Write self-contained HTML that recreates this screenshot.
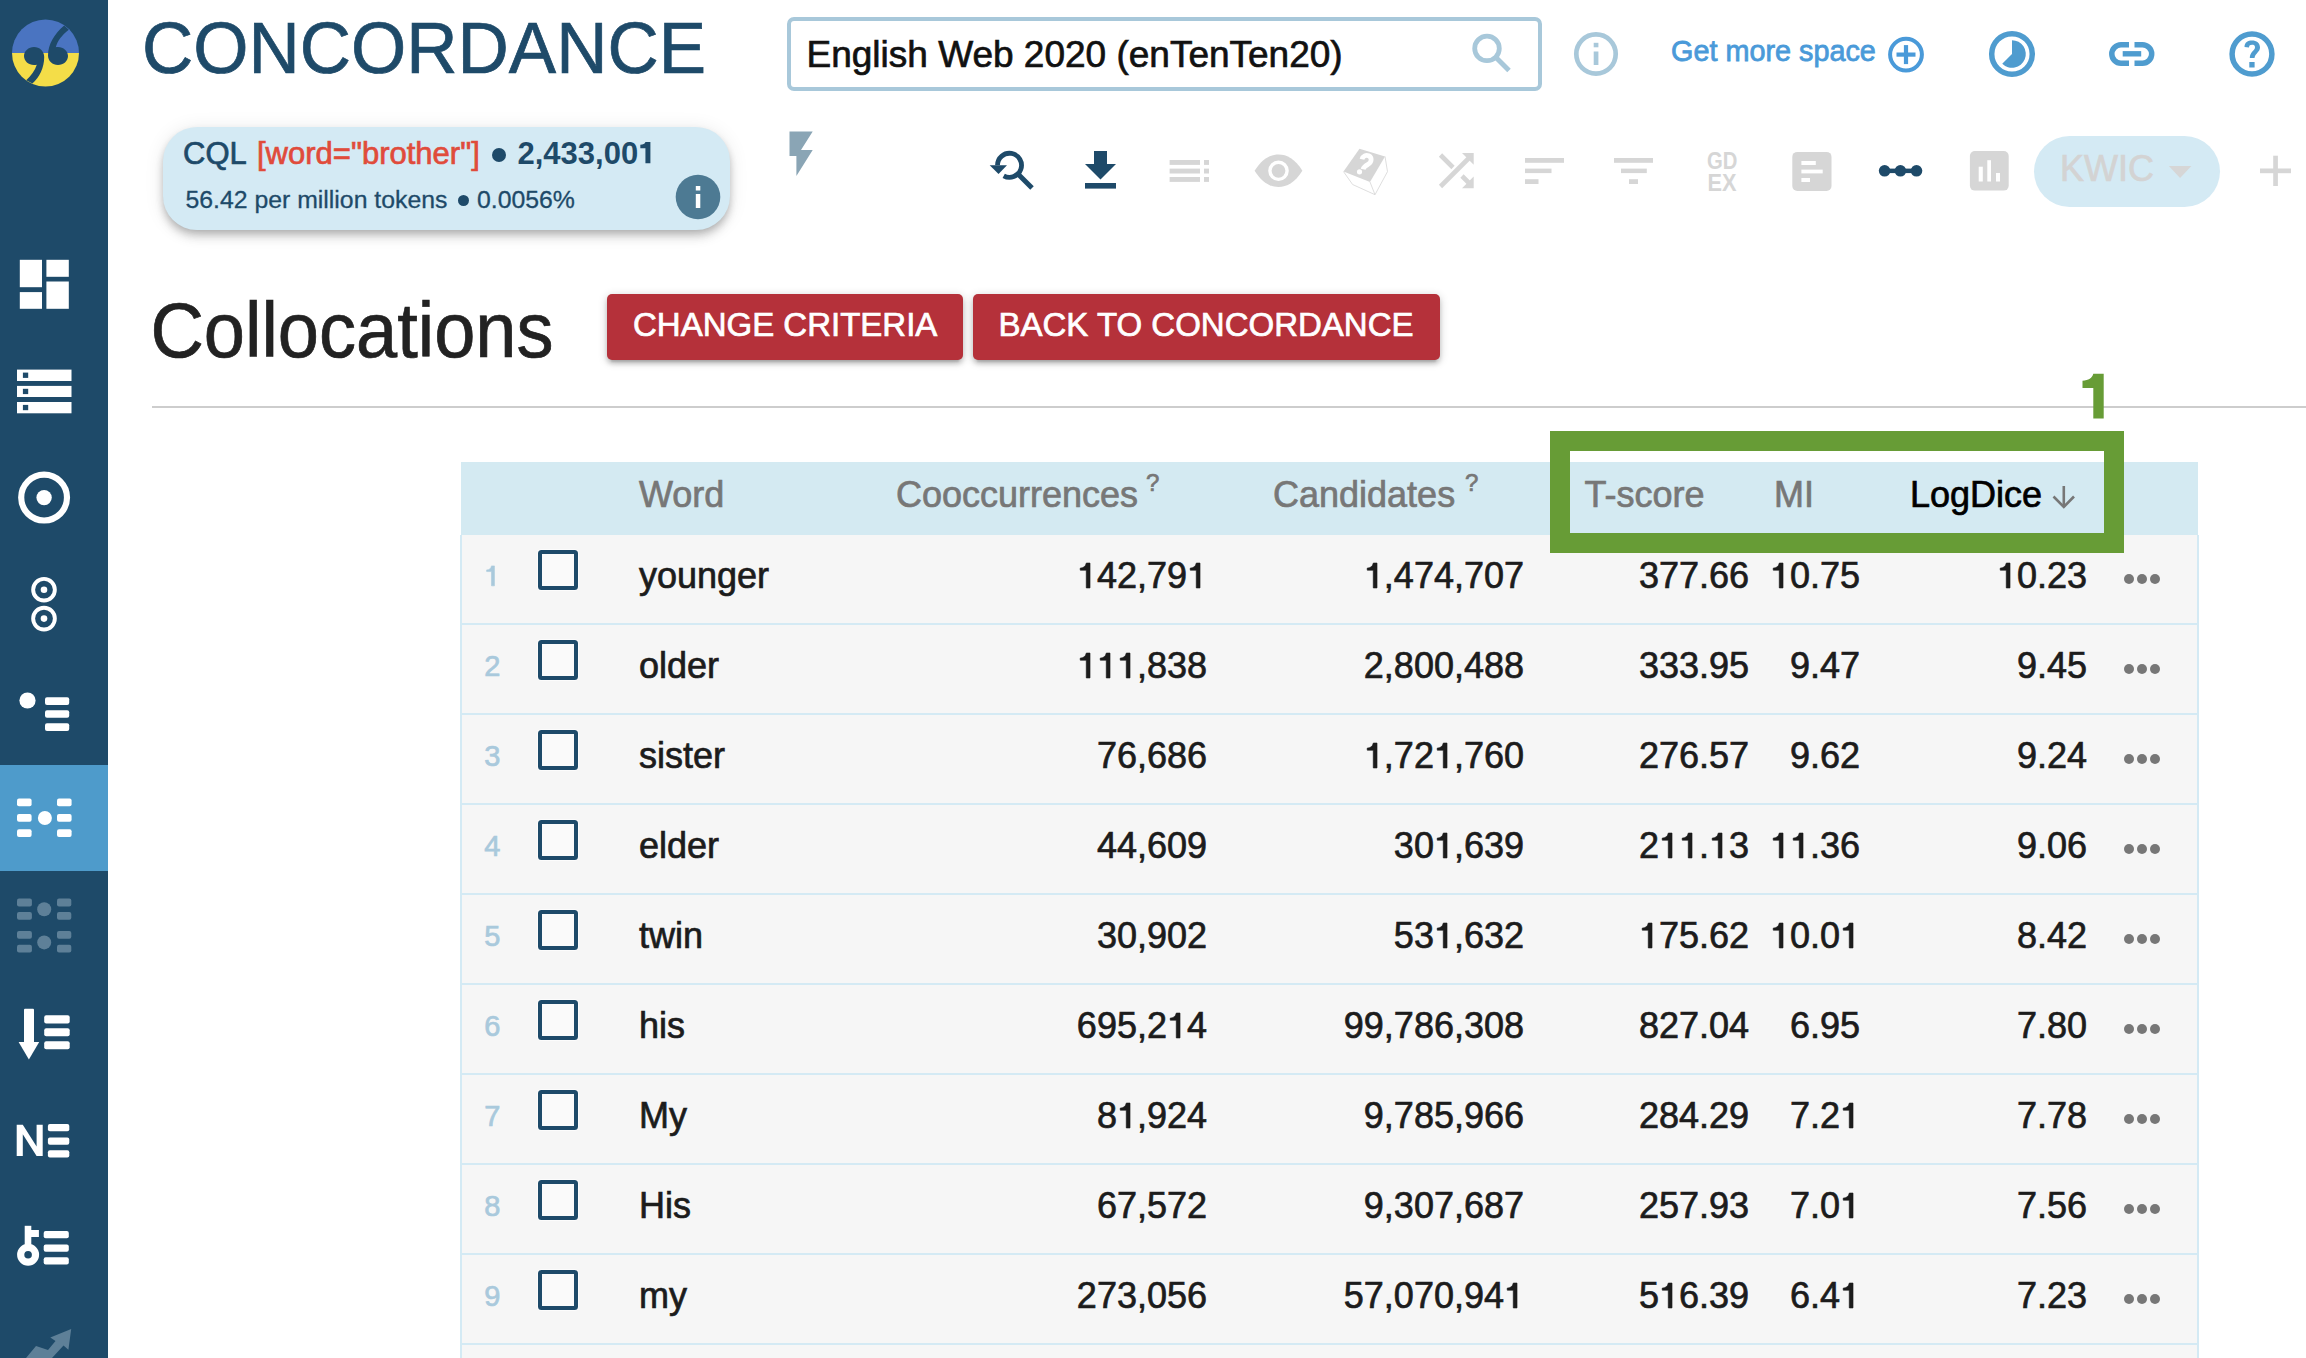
<!DOCTYPE html>
<html><head><meta charset="utf-8">
<style>
html,body{margin:0;padding:0;background:#fff;}
body{width:2306px;height:1358px;position:relative;overflow:hidden;font-family:"Liberation Sans",sans-serif;}
.t{position:absolute;line-height:1;white-space:nowrap;margin:0;-webkit-text-stroke-width:0.7px;}
.abs{position:absolute;}
#sidebar{left:0;top:0;width:108px;height:1358px;background:#1e4a69;}
#active{left:0;top:765px;width:108px;height:106px;background:#4e9bcb;}
#search{left:787px;top:17px;width:747px;height:66px;border:4px solid #a8c8da;border-radius:7px;}
#cql{left:163px;top:127px;width:567px;height:103px;background:#d4eaf4;border-radius:34px;box-shadow:0 8px 10px rgba(0,0,0,.10),0 2px 20px rgba(0,0,0,.09),0 4px 8px -2px rgba(0,0,0,.24);}
#kwic{left:2034px;top:136px;width:186px;height:71px;background:#d4eaf4;border-radius:36px;}
.btn{background:#b5313a;border-radius:5px;box-shadow:0 4px 4px rgba(0,0,0,.14),0 6px 2px -4px rgba(0,0,0,.12),0 2px 10px rgba(0,0,0,.2);}
#sep{left:152px;top:406px;width:2154px;height:2px;background:#cdcdcd;}
#thead{left:461px;top:462px;width:1737px;height:73px;background:#d4eaf2;}
#tbody{left:460px;top:535px;width:1735px;height:900px;background:#f6f6f6;border-left:2px solid #d4eaf4;border-right:2px solid #d4eaf4;}
.rsep{position:absolute;left:462px;width:1735px;height:2px;background:#d4eaf4;}
.cb{position:absolute;left:538px;width:32px;height:32px;border:4px solid #1e4a69;border-radius:3.5px;background:#fafafa;box-shadow:0 0 0 1px #fcfcfc;}
.idx{color:#a9c9dc;font-size:29px;}
.cell{color:#1c1c1c;font-size:36px;}
.num{text-align:right;}
.hd{color:#777;font-size:36px;}
#green{left:1550px;top:431px;width:534px;height:82px;border:20px solid #679c36;}
.one{width:0.556em;height:0.72em;vertical-align:baseline;fill:currentColor;stroke:currentColor;stroke-width:19px;overflow:visible;}
</style></head>
<body>
<div id="sidebar" class="abs"></div>
<div id="active" class="abs"></div>

<!-- top header -->
<div class="t" style="left:142px;top:13px;font-size:71px;color:#1e4a69;transform:scaleY(1.03);transform-origin:0 60px;">CONCORDANCE</div>
<div id="search" class="abs"></div>
<div class="t" style="left:806.5px;top:35.7px;font-size:37px;color:#111;">English Web 2020 (enTenTen20)</div>
<div class="t" style="left:1671.2px;top:35.8px;font-size:30px;color:#4a9ad9;-webkit-text-stroke:0.8px #4a9ad9;transform:scaleX(0.96);transform-origin:0 0;">Get more space</div>

<!-- CQL box -->
<div id="cql" class="abs"></div>
<div class="t" style="left:183px;top:137.8px;font-size:31px;color:#1e4a69;">CQL</div>
<div class="t" style="left:257px;top:137.8px;font-size:31px;color:#e04b3b;">[word="brother"]</div>
<div class="abs" style="left:492px;top:148px;width:14px;height:14px;border-radius:50%;background:#1e4a69;"></div>
<div class="t" style="left:517.5px;top:137.8px;font-size:31px;font-weight:bold;color:#1e4a69;-webkit-text-stroke-width:0;">2,433,00<svg class="one" style="stroke-width:0" viewBox="0 0 556 720"><path d="M240,30 L400,30 L400,720 L240,720 L240,236 L75,236 L75,120 C160,115 225,90 240,30 Z"/></svg></div>
<div class="t" style="left:185.5px;top:188px;font-size:24.8px;color:#1e4a69;-webkit-text-stroke-width:0.3px;">56.42 per million tokens</div>
<div class="abs" style="left:457.5px;top:195px;width:11px;height:11px;border-radius:50%;background:#1e4a69;"></div>
<div class="t" style="left:477px;top:188px;font-size:24.8px;color:#1e4a69;-webkit-text-stroke-width:0.3px;">0.0056%</div>

<div id="kwic" class="abs"></div>
<div class="t" style="left:2060px;top:150.5px;font-size:36px;color:#d3d3d3;">KWIC</div>

<!-- Collocations heading -->
<div class="t" style="left:150.4px;top:294.7px;font-size:74px;color:#222;transform:scaleY(1.06);transform-origin:0 62.7px;">Collocations</div>
<div class="abs btn" style="left:607px;top:294px;width:356px;height:66px;"></div>
<div class="abs btn" style="left:973px;top:294px;width:467px;height:66px;"></div>
<div class="t" style="left:633px;top:307.8px;font-size:33px;color:#fff;">CHANGE CRITERIA</div>
<div class="t" style="left:998.5px;top:307.8px;font-size:33px;color:#fff;">BACK TO CONCORDANCE</div>
<div id="sep" class="abs"></div>

<!-- table -->
<div id="thead" class="abs"></div>
<div id="tbody" class="abs"></div>
<div class="t hd" style="left:639px;top:476.5px;">Word</div>
<div class="t hd" style="left:896px;top:476.5px;">Cooccurrences</div>
<div class="t" style="left:1146px;top:471px;font-size:24px;color:#777;">?</div>
<div class="t hd" style="left:1273px;top:476.5px;">Candidates</div>
<div class="t" style="left:1465px;top:471px;font-size:24px;color:#777;">?</div>
<div class="t hd" style="left:1584.5px;top:476.5px;">T-score</div>
<div class="t hd" style="left:1774px;top:476.5px;">MI</div>
<div class="t hd" style="left:1910px;top:476.5px;color:#000;">LogDice</div>

<!--ROWS-->
<div class="rsep" style="top:623px;"></div>
<div class="t idx" style="left:484.2px;top:562.0px;"><svg class="one" viewBox="0 0 556 720"><path d="M258,30 L361,30 L361,720 L258,720 L258,226 L90,226 L90,170 C175,166 240,128 258,30 Z"/></svg></div>
<div class="cb" style="top:550px;"></div>
<div class="t cell" style="left:639px;top:557.5px;">younger</div>
<div class="t cell num" style="left:907px;width:300px;top:557.5px;"><svg class="one" viewBox="0 0 556 720"><path d="M258,30 L361,30 L361,720 L258,720 L258,226 L90,226 L90,170 C175,166 240,128 258,30 Z"/></svg>42,79<svg class="one" viewBox="0 0 556 720"><path d="M258,30 L361,30 L361,720 L258,720 L258,226 L90,226 L90,170 C175,166 240,128 258,30 Z"/></svg></div>
<div class="t cell num" style="left:1224px;width:300px;top:557.5px;"><svg class="one" viewBox="0 0 556 720"><path d="M258,30 L361,30 L361,720 L258,720 L258,226 L90,226 L90,170 C175,166 240,128 258,30 Z"/></svg>,474,707</div>
<div class="t cell num" style="left:1449px;width:300px;top:557.5px;">377.66</div>
<div class="t cell num" style="left:1560px;width:300px;top:557.5px;"><svg class="one" viewBox="0 0 556 720"><path d="M258,30 L361,30 L361,720 L258,720 L258,226 L90,226 L90,170 C175,166 240,128 258,30 Z"/></svg>0.75</div>
<div class="t cell num" style="left:1787px;width:300px;top:557.5px;"><svg class="one" viewBox="0 0 556 720"><path d="M258,30 L361,30 L361,720 L258,720 L258,226 L90,226 L90,170 C175,166 240,128 258,30 Z"/></svg>0.23</div>
<div class="abs" style="left:2123.9px;top:573.7px;width:10px;height:10px;border-radius:50%;background:#777;"></div>
<div class="abs" style="left:2136.8px;top:573.7px;width:10px;height:10px;border-radius:50%;background:#777;"></div>
<div class="abs" style="left:2149.7px;top:573.7px;width:10px;height:10px;border-radius:50%;background:#777;"></div>
<div class="rsep" style="top:713px;"></div>
<div class="t idx" style="left:484.2px;top:652.0px;">2</div>
<div class="cb" style="top:640px;"></div>
<div class="t cell" style="left:639px;top:647.5px;">older</div>
<div class="t cell num" style="left:907px;width:300px;top:647.5px;"><svg class="one" viewBox="0 0 556 720"><path d="M258,30 L361,30 L361,720 L258,720 L258,226 L90,226 L90,170 C175,166 240,128 258,30 Z"/></svg><svg class="one" viewBox="0 0 556 720"><path d="M258,30 L361,30 L361,720 L258,720 L258,226 L90,226 L90,170 C175,166 240,128 258,30 Z"/></svg><svg class="one" viewBox="0 0 556 720"><path d="M258,30 L361,30 L361,720 L258,720 L258,226 L90,226 L90,170 C175,166 240,128 258,30 Z"/></svg>,838</div>
<div class="t cell num" style="left:1224px;width:300px;top:647.5px;">2,800,488</div>
<div class="t cell num" style="left:1449px;width:300px;top:647.5px;">333.95</div>
<div class="t cell num" style="left:1560px;width:300px;top:647.5px;">9.47</div>
<div class="t cell num" style="left:1787px;width:300px;top:647.5px;">9.45</div>
<div class="abs" style="left:2123.9px;top:663.7px;width:10px;height:10px;border-radius:50%;background:#777;"></div>
<div class="abs" style="left:2136.8px;top:663.7px;width:10px;height:10px;border-radius:50%;background:#777;"></div>
<div class="abs" style="left:2149.7px;top:663.7px;width:10px;height:10px;border-radius:50%;background:#777;"></div>
<div class="rsep" style="top:803px;"></div>
<div class="t idx" style="left:484.2px;top:742.0px;">3</div>
<div class="cb" style="top:730px;"></div>
<div class="t cell" style="left:639px;top:737.5px;">sister</div>
<div class="t cell num" style="left:907px;width:300px;top:737.5px;">76,686</div>
<div class="t cell num" style="left:1224px;width:300px;top:737.5px;"><svg class="one" viewBox="0 0 556 720"><path d="M258,30 L361,30 L361,720 L258,720 L258,226 L90,226 L90,170 C175,166 240,128 258,30 Z"/></svg>,72<svg class="one" viewBox="0 0 556 720"><path d="M258,30 L361,30 L361,720 L258,720 L258,226 L90,226 L90,170 C175,166 240,128 258,30 Z"/></svg>,760</div>
<div class="t cell num" style="left:1449px;width:300px;top:737.5px;">276.57</div>
<div class="t cell num" style="left:1560px;width:300px;top:737.5px;">9.62</div>
<div class="t cell num" style="left:1787px;width:300px;top:737.5px;">9.24</div>
<div class="abs" style="left:2123.9px;top:753.7px;width:10px;height:10px;border-radius:50%;background:#777;"></div>
<div class="abs" style="left:2136.8px;top:753.7px;width:10px;height:10px;border-radius:50%;background:#777;"></div>
<div class="abs" style="left:2149.7px;top:753.7px;width:10px;height:10px;border-radius:50%;background:#777;"></div>
<div class="rsep" style="top:893px;"></div>
<div class="t idx" style="left:484.2px;top:832.0px;">4</div>
<div class="cb" style="top:820px;"></div>
<div class="t cell" style="left:639px;top:827.5px;">elder</div>
<div class="t cell num" style="left:907px;width:300px;top:827.5px;">44,609</div>
<div class="t cell num" style="left:1224px;width:300px;top:827.5px;">30<svg class="one" viewBox="0 0 556 720"><path d="M258,30 L361,30 L361,720 L258,720 L258,226 L90,226 L90,170 C175,166 240,128 258,30 Z"/></svg>,639</div>
<div class="t cell num" style="left:1449px;width:300px;top:827.5px;">2<svg class="one" viewBox="0 0 556 720"><path d="M258,30 L361,30 L361,720 L258,720 L258,226 L90,226 L90,170 C175,166 240,128 258,30 Z"/></svg><svg class="one" viewBox="0 0 556 720"><path d="M258,30 L361,30 L361,720 L258,720 L258,226 L90,226 L90,170 C175,166 240,128 258,30 Z"/></svg>.<svg class="one" viewBox="0 0 556 720"><path d="M258,30 L361,30 L361,720 L258,720 L258,226 L90,226 L90,170 C175,166 240,128 258,30 Z"/></svg>3</div>
<div class="t cell num" style="left:1560px;width:300px;top:827.5px;"><svg class="one" viewBox="0 0 556 720"><path d="M258,30 L361,30 L361,720 L258,720 L258,226 L90,226 L90,170 C175,166 240,128 258,30 Z"/></svg><svg class="one" viewBox="0 0 556 720"><path d="M258,30 L361,30 L361,720 L258,720 L258,226 L90,226 L90,170 C175,166 240,128 258,30 Z"/></svg>.36</div>
<div class="t cell num" style="left:1787px;width:300px;top:827.5px;">9.06</div>
<div class="abs" style="left:2123.9px;top:843.7px;width:10px;height:10px;border-radius:50%;background:#777;"></div>
<div class="abs" style="left:2136.8px;top:843.7px;width:10px;height:10px;border-radius:50%;background:#777;"></div>
<div class="abs" style="left:2149.7px;top:843.7px;width:10px;height:10px;border-radius:50%;background:#777;"></div>
<div class="rsep" style="top:983px;"></div>
<div class="t idx" style="left:484.2px;top:922.0px;">5</div>
<div class="cb" style="top:910px;"></div>
<div class="t cell" style="left:639px;top:917.5px;">twin</div>
<div class="t cell num" style="left:907px;width:300px;top:917.5px;">30,902</div>
<div class="t cell num" style="left:1224px;width:300px;top:917.5px;">53<svg class="one" viewBox="0 0 556 720"><path d="M258,30 L361,30 L361,720 L258,720 L258,226 L90,226 L90,170 C175,166 240,128 258,30 Z"/></svg>,632</div>
<div class="t cell num" style="left:1449px;width:300px;top:917.5px;"><svg class="one" viewBox="0 0 556 720"><path d="M258,30 L361,30 L361,720 L258,720 L258,226 L90,226 L90,170 C175,166 240,128 258,30 Z"/></svg>75.62</div>
<div class="t cell num" style="left:1560px;width:300px;top:917.5px;"><svg class="one" viewBox="0 0 556 720"><path d="M258,30 L361,30 L361,720 L258,720 L258,226 L90,226 L90,170 C175,166 240,128 258,30 Z"/></svg>0.0<svg class="one" viewBox="0 0 556 720"><path d="M258,30 L361,30 L361,720 L258,720 L258,226 L90,226 L90,170 C175,166 240,128 258,30 Z"/></svg></div>
<div class="t cell num" style="left:1787px;width:300px;top:917.5px;">8.42</div>
<div class="abs" style="left:2123.9px;top:933.7px;width:10px;height:10px;border-radius:50%;background:#777;"></div>
<div class="abs" style="left:2136.8px;top:933.7px;width:10px;height:10px;border-radius:50%;background:#777;"></div>
<div class="abs" style="left:2149.7px;top:933.7px;width:10px;height:10px;border-radius:50%;background:#777;"></div>
<div class="rsep" style="top:1073px;"></div>
<div class="t idx" style="left:484.2px;top:1012.0px;">6</div>
<div class="cb" style="top:1000px;"></div>
<div class="t cell" style="left:639px;top:1007.5px;">his</div>
<div class="t cell num" style="left:907px;width:300px;top:1007.5px;">695,2<svg class="one" viewBox="0 0 556 720"><path d="M258,30 L361,30 L361,720 L258,720 L258,226 L90,226 L90,170 C175,166 240,128 258,30 Z"/></svg>4</div>
<div class="t cell num" style="left:1224px;width:300px;top:1007.5px;">99,786,308</div>
<div class="t cell num" style="left:1449px;width:300px;top:1007.5px;">827.04</div>
<div class="t cell num" style="left:1560px;width:300px;top:1007.5px;">6.95</div>
<div class="t cell num" style="left:1787px;width:300px;top:1007.5px;">7.80</div>
<div class="abs" style="left:2123.9px;top:1023.7px;width:10px;height:10px;border-radius:50%;background:#777;"></div>
<div class="abs" style="left:2136.8px;top:1023.7px;width:10px;height:10px;border-radius:50%;background:#777;"></div>
<div class="abs" style="left:2149.7px;top:1023.7px;width:10px;height:10px;border-radius:50%;background:#777;"></div>
<div class="rsep" style="top:1163px;"></div>
<div class="t idx" style="left:484.2px;top:1102.0px;">7</div>
<div class="cb" style="top:1090px;"></div>
<div class="t cell" style="left:639px;top:1097.5px;">My</div>
<div class="t cell num" style="left:907px;width:300px;top:1097.5px;">8<svg class="one" viewBox="0 0 556 720"><path d="M258,30 L361,30 L361,720 L258,720 L258,226 L90,226 L90,170 C175,166 240,128 258,30 Z"/></svg>,924</div>
<div class="t cell num" style="left:1224px;width:300px;top:1097.5px;">9,785,966</div>
<div class="t cell num" style="left:1449px;width:300px;top:1097.5px;">284.29</div>
<div class="t cell num" style="left:1560px;width:300px;top:1097.5px;">7.2<svg class="one" viewBox="0 0 556 720"><path d="M258,30 L361,30 L361,720 L258,720 L258,226 L90,226 L90,170 C175,166 240,128 258,30 Z"/></svg></div>
<div class="t cell num" style="left:1787px;width:300px;top:1097.5px;">7.78</div>
<div class="abs" style="left:2123.9px;top:1113.7px;width:10px;height:10px;border-radius:50%;background:#777;"></div>
<div class="abs" style="left:2136.8px;top:1113.7px;width:10px;height:10px;border-radius:50%;background:#777;"></div>
<div class="abs" style="left:2149.7px;top:1113.7px;width:10px;height:10px;border-radius:50%;background:#777;"></div>
<div class="rsep" style="top:1253px;"></div>
<div class="t idx" style="left:484.2px;top:1192.0px;">8</div>
<div class="cb" style="top:1180px;"></div>
<div class="t cell" style="left:639px;top:1187.5px;">His</div>
<div class="t cell num" style="left:907px;width:300px;top:1187.5px;">67,572</div>
<div class="t cell num" style="left:1224px;width:300px;top:1187.5px;">9,307,687</div>
<div class="t cell num" style="left:1449px;width:300px;top:1187.5px;">257.93</div>
<div class="t cell num" style="left:1560px;width:300px;top:1187.5px;">7.0<svg class="one" viewBox="0 0 556 720"><path d="M258,30 L361,30 L361,720 L258,720 L258,226 L90,226 L90,170 C175,166 240,128 258,30 Z"/></svg></div>
<div class="t cell num" style="left:1787px;width:300px;top:1187.5px;">7.56</div>
<div class="abs" style="left:2123.9px;top:1203.7px;width:10px;height:10px;border-radius:50%;background:#777;"></div>
<div class="abs" style="left:2136.8px;top:1203.7px;width:10px;height:10px;border-radius:50%;background:#777;"></div>
<div class="abs" style="left:2149.7px;top:1203.7px;width:10px;height:10px;border-radius:50%;background:#777;"></div>
<div class="rsep" style="top:1343px;"></div>
<div class="t idx" style="left:484.2px;top:1282.0px;">9</div>
<div class="cb" style="top:1270px;"></div>
<div class="t cell" style="left:639px;top:1277.5px;">my</div>
<div class="t cell num" style="left:907px;width:300px;top:1277.5px;">273,056</div>
<div class="t cell num" style="left:1224px;width:300px;top:1277.5px;">57,070,94<svg class="one" viewBox="0 0 556 720"><path d="M258,30 L361,30 L361,720 L258,720 L258,226 L90,226 L90,170 C175,166 240,128 258,30 Z"/></svg></div>
<div class="t cell num" style="left:1449px;width:300px;top:1277.5px;">5<svg class="one" viewBox="0 0 556 720"><path d="M258,30 L361,30 L361,720 L258,720 L258,226 L90,226 L90,170 C175,166 240,128 258,30 Z"/></svg>6.39</div>
<div class="t cell num" style="left:1560px;width:300px;top:1277.5px;">6.4<svg class="one" viewBox="0 0 556 720"><path d="M258,30 L361,30 L361,720 L258,720 L258,226 L90,226 L90,170 C175,166 240,128 258,30 Z"/></svg></div>
<div class="t cell num" style="left:1787px;width:300px;top:1277.5px;">7.23</div>
<div class="abs" style="left:2123.9px;top:1293.7px;width:10px;height:10px;border-radius:50%;background:#777;"></div>
<div class="abs" style="left:2136.8px;top:1293.7px;width:10px;height:10px;border-radius:50%;background:#777;"></div>
<div class="abs" style="left:2149.7px;top:1293.7px;width:10px;height:10px;border-radius:50%;background:#777;"></div>
<div class="rsep" style="top:1433px;"></div>
<!--/ROWS-->

<div id="green" class="abs"></div>

<svg class="abs" style="left:0;top:0;" width="2306" height="1358" viewBox="0 0 2306 1358">
<!-- logo -->
<defs><clipPath id="lc"><circle cx="45.5" cy="53" r="33.5"/></clipPath></defs>
<g clip-path="url(#lc)">
<rect x="10" y="18" width="72" height="35" fill="#4a74c1"/>
<rect x="10" y="53" width="72" height="36" fill="#f4dd48"/>
</g>
<g fill="#1e4a69">
<path d="M34,47 C39.5,47 44.2,51 44.2,57 C44.2,68 39.5,77 32.4,83.6 L26.2,80.2 C31,76 35,70.5 36.8,64.8 C35.9,64.95 35,65 34,65 C28.5,65 24,61 24,56 C24,51 28.5,47 34,47 Z"/>
<path d="M58,65 C52.5,65 48,61 48,55.5 C48,45 54,34 64.2,25.6 L68.8,29.8 C62,35 57.5,41 55.8,47.3 C56.5,47.1 57.2,47 58,47 C63.5,47 68,51 68,56 C68,61 63.5,65 58,65 Z"/>
</g>
<!-- sidebar icons -->
<g fill="#fff">
<rect x="19.8" y="259.8" width="22.2" height="27.4"/>
<rect x="19.8" y="292.1" width="22.2" height="16.7"/>
<rect x="46.4" y="259.8" width="22.4" height="17"/>
<rect x="46.4" y="281.5" width="22.4" height="27.3"/>
<rect x="17" y="369.6" width="54.5" height="11.4"/>
<rect x="17" y="385.9" width="54.5" height="11.1"/>
<rect x="17" y="402" width="54.5" height="11.3"/>
</g>
<g fill="#1e4a69">
<rect x="22.9" y="372.6" width="5.3" height="5.3"/>
<rect x="22.9" y="388.8" width="5.3" height="5.3"/>
<rect x="22.9" y="404.9" width="5.3" height="5.3"/>
</g>
<circle cx="44.1" cy="497.6" r="22.9" fill="none" stroke="#fff" stroke-width="6.2"/>
<circle cx="44.1" cy="497.6" r="7.7" fill="#fff"/>
<circle cx="44" cy="589.7" r="10.85" fill="none" stroke="#fff" stroke-width="3.9"/>
<circle cx="44" cy="589.7" r="3.3" fill="#fff"/>
<circle cx="44" cy="618.6" r="10.85" fill="none" stroke="#fff" stroke-width="3.9"/>
<circle cx="44" cy="618.6" r="3.3" fill="#fff"/>
<g fill="#fff">
<circle cx="27.5" cy="700.5" r="8.1"/>
<rect x="45" y="697.3" width="24.2" height="7.6" rx="2"/>
<rect x="45" y="710.2" width="24.2" height="7.6" rx="2"/>
<rect x="45" y="723.2" width="24.2" height="7.8" rx="2"/>
<rect x="17" y="798.5" width="14.6" height="7.8" rx="2"/>
<rect x="17" y="813.9" width="14.6" height="7.8" rx="2"/>
<rect x="17" y="829.3" width="14.6" height="7.8" rx="2"/>
<rect x="57" y="798.5" width="14.6" height="7.8" rx="2"/>
<rect x="57" y="813.9" width="14.6" height="7.8" rx="2"/>
<rect x="57" y="829.3" width="14.6" height="7.8" rx="2"/>
<circle cx="44.9" cy="818" r="7"/>
</g>
<g fill="#5e8098">
<rect x="17" y="898.6" width="14.9" height="7.8" rx="2"/>
<rect x="17" y="912" width="14.9" height="7.8" rx="2"/>
<rect x="17" y="931" width="14.9" height="7.8" rx="2"/>
<rect x="17" y="944.8" width="14.9" height="7.8" rx="2"/>
<rect x="57" y="898.6" width="14.3" height="7.8" rx="2"/>
<rect x="57" y="912" width="14.3" height="7.8" rx="2"/>
<rect x="57" y="931" width="14.3" height="7.8" rx="2"/>
<rect x="57" y="944.8" width="14.3" height="7.8" rx="2"/>
<circle cx="44.2" cy="909.2" r="7"/>
<circle cx="44.2" cy="942.4" r="7"/>
</g>
<g fill="#fff">
<rect x="24" y="1008.8" width="10" height="34" rx="1"/>
<path d="M18.6,1042 L39.2,1042 L28.9,1059.5 Z"/>
<rect x="44.2" y="1015.3" width="25.5" height="8.1" rx="2"/>
<rect x="44.2" y="1028.2" width="25.5" height="8.1" rx="2"/>
<rect x="44.2" y="1041.2" width="25.5" height="8.1" rx="2"/>
<path d="M16.7,1124.7 L22.8,1124.7 L36.6,1146.5 L36.6,1124.7 L42.7,1124.7 L42.7,1156 L36.6,1156 L22.8,1134.2 L22.8,1156 L16.7,1156 Z"/>
<rect x="47.9" y="1124" width="21.4" height="7.3" rx="2"/>
<rect x="47.9" y="1137.4" width="21.4" height="7.3" rx="2"/>
<rect x="47.9" y="1150.3" width="21.4" height="7.3" rx="2"/>
<rect x="24.7" y="1225.8" width="6.6" height="24.5"/>
<rect x="31" y="1230" width="7.9" height="7"/>
<rect x="43.7" y="1231" width="25.1" height="7.3" rx="2"/>
<rect x="43.7" y="1244.4" width="25.1" height="7.3" rx="2"/>
<rect x="43.7" y="1257.3" width="25.1" height="7.3" rx="2"/>
</g>
<circle cx="28.1" cy="1254.8" r="7.4" fill="none" stroke="#fff" stroke-width="7.2"/>
<g fill="#5e8098">
<path d="M26,1358 L36,1346 L48,1350 L55.5,1341 L50.3,1337.5 L71.2,1328.9 L68.4,1349.8 L63.5,1345.5 L52,1358 Z"/>
</g>
<!-- top right icons -->
<circle cx="1487" cy="48.4" r="12.3" fill="none" stroke="#a8c8da" stroke-width="4.8"/>
<path d="M1496,57.5 L1509,70.5" stroke="#a8c8da" stroke-width="5" fill="none"/>
<circle cx="1596" cy="54" r="19.7" fill="none" stroke="#a8c8da" stroke-width="4.7"/>
<rect x="1593.7" y="42.8" width="4.7" height="4.5" fill="#a8c8da"/>
<rect x="1593.7" y="51.5" width="4.7" height="13.5" fill="#a8c8da"/>
<circle cx="1906" cy="54.6" r="15.9" fill="none" stroke="#4a9ad9" stroke-width="4"/>
<rect x="1896.5" y="52.5" width="19" height="4.2" fill="#4a9ad9"/>
<rect x="1903.9" y="45.1" width="4.2" height="19" fill="#4a9ad9"/>
<circle cx="2012" cy="54" r="20.3" fill="none" stroke="#4f9ccf" stroke-width="5.5"/>
<path d="M2012,54 L2012,40.2 A13.8,13.8 0 1 1 2002.24,63.76 Z" fill="#4f9ccf"/>
<g fill="none" stroke="#4f9ccf" stroke-width="5.5">
<path d="M2129,44.8 L2121,44.8 A9.2,9.2 0 0 0 2121,63.2 L2129,63.2"/>
<path d="M2134.5,44.8 L2142.5,44.8 A9.2,9.2 0 0 1 2142.5,63.2 L2134.5,63.2"/>
</g>
<rect x="2122.7" y="51.1" width="18.5" height="5.4" fill="#4f9ccf"/>
<circle cx="2252" cy="54" r="19.9" fill="none" stroke="#4f9ccf" stroke-width="5.5"/>
<path d="M2244.5,47 C2244.5,42 2248,40.5 2252,40.5 C2256.5,40.5 2260,43 2260,47.5 C2260,52 2255,53.5 2254.5,58 L2249.8,58 C2249.8,52 2255,50.5 2255,47.3 C2255,45.3 2253.8,44.8 2252,44.8 C2250.2,44.8 2249,45.5 2249,47.5 Z" fill="#4f9ccf"/>
<rect x="2249.3" y="62" width="5.3" height="5.5" fill="#4f9ccf"/>
<!-- CQL info -->
<circle cx="698" cy="197" r="22.3" fill="#4d7a93"/>
<rect x="695.8" y="186" width="4.5" height="4.5" fill="#fff"/>
<rect x="695.8" y="194" width="4.5" height="14" fill="#fff"/>
<!-- lightning -->
<path d="M789.5,131.5 L812.7,131.5 L801,149.9 L812.7,149.9 L796.4,175.9 L796.4,156.1 L789.5,156.1 Z" fill="#8aa5b5"/>
<path d="M2082.5,380.8 C2088.5,380.3 2092.3,378 2093.3,373.8 L2103.7,373.8 L2103.7,418.5 L2093.3,418.5 L2093.3,388 L2082.5,388 Z" fill="#679c36"/>
<!-- toolbar -->
<g fill="#1e4a69">
<path d="M997.5,165.3 A12,12 0 1 1 1003.7,175.8" fill="none" stroke="#1e4a69" stroke-width="4.8"/>
<path d="M989.7,165.2 L1007,165.2 L998.5,174 Z"/>
<path d="M1018.5,174.5 L1032,188" stroke="#1e4a69" stroke-width="5" fill="none"/>
<rect x="1094" y="151" width="13" height="13.5"/>
<path d="M1085,164 L1116,164 L1100.5,179.5 Z"/>
<rect x="1085" y="183" width="31" height="5.6"/>
</g>
<g fill="#d6d6d6">
<rect x="1169.6" y="160" width="30.4" height="4.9"/>
<rect x="1169.6" y="168.6" width="30.4" height="4.9"/>
<rect x="1169.6" y="177" width="30.4" height="4.9"/>
<rect x="1204" y="160" width="5" height="4.9"/>
<rect x="1204" y="168.6" width="5" height="4.9"/>
<rect x="1204" y="177" width="5" height="4.9"/>
<path d="M1254.6,170.8 C1262,159 1270,154.6 1278.5,154.6 C1287,154.6 1295,159 1302.4,170.8 C1295,182.6 1287,187 1278.5,187 C1270,187 1262,182.6 1254.6,170.8 Z"/>
</g>
<circle cx="1278.5" cy="170.8" r="8.6" fill="none" stroke="#fff" stroke-width="3.4"/>
<path d="M1359.5,148.8 L1385,156.4 L1370,182 L1343.5,171.6 Z" fill="#d6d6d6"/>
<path d="M1343.5,171.6 L1352.6,184.5 L1375,194.7 L1387.5,171.6 L1385,156.4 M1370,182 L1375,194.7" fill="none" stroke="#d6d6d6" stroke-width="0.8"/>
<path d="M1362,159.3 C1362.8,155.8 1366.1,154.7 1368.6,155.8 C1372.1,157.3 1372,162 1368.1,164.3 C1365.6,165.7 1363.6,166.8 1363.1,169.2" fill="none" stroke="#fff" stroke-width="4.8"/>
<circle cx="1359.5" cy="171.8" r="2.6" fill="#fff"/>
<g stroke="#d6d6d6" stroke-width="4.6" fill="none">
<path d="M1440.5,155 L1453,167.5"/>
<path d="M1440.5,186.5 L1469.5,157.5"/>
<path d="M1462,176 L1469.5,183.5"/>
</g>
<g fill="#d6d6d6">
<path d="M1462,153 L1473.7,153 L1473.7,164.7 Z"/>
<path d="M1473.7,176.6 L1473.7,188.3 L1462,188.3 Z"/>
<rect x="1525" y="158" width="39" height="4.8"/>
<rect x="1525" y="168.6" width="26.5" height="4.5"/>
<rect x="1525" y="179.2" width="13.5" height="4.8"/>
<rect x="1614" y="158" width="39" height="4.8"/>
<rect x="1621" y="168.6" width="25.8" height="4.5"/>
<rect x="1629" y="179.2" width="9" height="4.8"/>
<rect x="1792.3" y="151.9" width="39.2" height="39.1" rx="5"/>
<rect x="1969.9" y="151" width="38.8" height="39.6" rx="5"/>
<path d="M2168.8,166 L2191.4,166 L2180.1,178 Z"/>
<rect x="2260" y="168.5" width="31" height="4.7"/>
<rect x="2273.2" y="155.7" width="4.7" height="30.3"/>
</g>
<text x="1707" y="169.3" font-family="Liberation Sans" font-weight="bold" font-size="23" fill="#d6d6d6" textLength="30.4" lengthAdjust="spacingAndGlyphs">GD</text>
<text x="1707.5" y="190.6" font-family="Liberation Sans" font-weight="bold" font-size="23" fill="#d6d6d6" textLength="29" lengthAdjust="spacingAndGlyphs">EX</text>
<g fill="#fff">
<rect x="1801.4" y="161" width="14.4" height="4"/>
<rect x="1801.4" y="169.6" width="21.3" height="3.8"/>
<rect x="1801.4" y="178" width="8.6" height="4"/>
<rect x="1978.7" y="166.7" width="4.1" height="14.8"/>
<rect x="1987.3" y="160.2" width="3.7" height="21.3"/>
<rect x="1996" y="173" width="4" height="8.5"/>
</g>
<g fill="#1e4a69">
<circle cx="1884.6" cy="170.8" r="5.8"/>
<circle cx="1900.4" cy="170.8" r="5.8"/>
<circle cx="1916.5" cy="170.8" r="5.8"/>
<rect x="1884.6" y="168.6" width="32" height="4.5"/>
</g>
<!-- header: arrow and "?" -->
<g stroke="#777" stroke-width="2.6" fill="none">
<path d="M2063.8,486 L2063.8,507"/>
<path d="M2053.5,496.5 L2063.8,507 L2074,496.5"/>
</g>

</svg>
</body></html>
